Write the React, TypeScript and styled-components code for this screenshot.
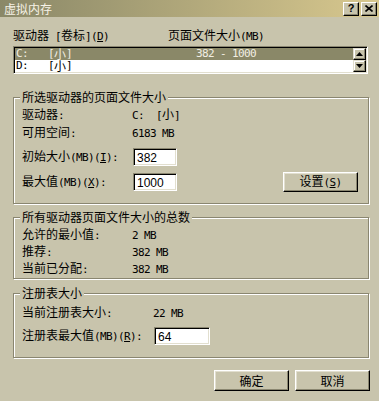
import React from 'react';
import styled, { createGlobalStyle } from 'styled-components';

const FACE = '#c8c4ac';
const FACE_LIGHT = '#e2dfcf';
const SHADOW = '#8a8670';
const DARK = '#000000';
const LIGHT = '#ffffff';
const HILITE = '#8a8868';

const Global = createGlobalStyle`
  html, body { margin: 0; padding: 0; background: ${FACE}; }
  body {
    font-family: "Noto Sans CJK SC", sans-serif;
    font-size: 12px;
    color: #000;
  }
  #root { width: 379px; height: 401px; overflow: hidden; }
`;

const Window = styled.div`
  width: 379px;
  height: 401px;
  background: ${FACE};
  display: flex;
  flex-direction: column;
`;

const TitleBar = styled.div`
  height: 17px;
  flex: none;
  display: flex;
  align-items: center;
  justify-content: space-between;
  padding: 0 2px 0 4px;
  background: linear-gradient(to right, #8a8868, #d8c88e);
`;

const TitleText = styled.span`
  color: #f6f2e6;
  font-size: 12px;
  line-height: 12px;
`;

const CaptionButtons = styled.div`
  display: flex;
  gap: 2px;
`;

const CaptionButton = styled.div`
  width: 16px;
  height: 14px;
  box-sizing: border-box;
  background: ${FACE};
  border: 1px solid;
  border-color: ${LIGHT} ${DARK} ${DARK} ${LIGHT};
  box-shadow: inset -1px -1px 0 ${SHADOW};
  display: flex;
  align-items: center;
  justify-content: center;
  font: bold 11px "Liberation Sans", sans-serif;
  line-height: 11px;
`;

const Body = styled.div`
  display: flex;
  flex-direction: column;
  padding: 12px 10px 0 13px;
`;

const ListHeader = styled.div`
  display: grid;
  grid-template-columns: 155px 1fr;
  height: 12px;
  line-height: 12px;
  white-space: nowrap;
`;

const ListBox = styled.div`
  margin: 5px 1px 0 0;
  height: 28px;
  box-sizing: border-box;
  border: 1px solid;
  border-color: ${SHADOW} ${LIGHT} ${LIGHT} ${SHADOW};
  box-shadow: inset 1px 1px 0 ${DARK}, inset -1px -1px 0 ${FACE_LIGHT};
  padding: 1px;
  background: #fff;
  display: flex;
`;

const Rows = styled.div`
  flex: 1;
  display: flex;
  flex-direction: column;
`;

const Row = styled.div<{ $selected?: boolean }>`
  height: 12px;
  overflow: hidden;
  display: grid;
  grid-template-columns: 32px 148px 1fr;
  padding-left: 1px;
  white-space: nowrap;
  background: ${(p) => (p.$selected ? HILITE : '#fff')};
  color: ${(p) => (p.$selected ? '#f2eee2' : '#000')};
`;

const Cell = styled.span`
  white-space: pre;
  line-height: 12px;
`;

const RowCell = styled.span`
  height: 12px;
  display: flex;
  align-items: center;
  white-space: pre;
  line-height: 12px;
`;

const ScrollBar = styled.div`
  width: 13px;
  display: flex;
  flex-direction: column;
`;

const ScrollButton = styled.div`
  height: 12px;
  box-sizing: border-box;
  background: ${FACE};
  border: 1px solid;
  border-color: ${FACE_LIGHT} ${DARK} ${DARK} ${FACE_LIGHT};
  box-shadow: inset -1px -1px 0 ${SHADOW}, inset 1px 1px 0 ${LIGHT};
  display: flex;
  align-items: center;
  justify-content: center;
`;

const Group = styled.fieldset<{ $mt: number; $pt: number; $pb: number }>`
  margin: ${(p) => p.$mt}px 0 0 0;
  padding: ${(p) => p.$pt}px 10px ${(p) => p.$pb}px 8px;
  border: 1px solid ${SHADOW};
  box-shadow: inset 1px 1px 0 ${LIGHT}, 1px 1px 0 ${LIGHT};
  min-inline-size: auto;
  display: flex;
  flex-direction: column;
`;

const Legend = styled.legend`
  padding: 0 2px;
  margin-left: -2px;
  font-size: 12px;
  line-height: 12px;
  background: ${FACE};
  white-space: nowrap;
`;

const FieldRow = styled.div<{ $h: number }>`
  display: flex;
  align-items: center;
  height: ${(p) => p.$h}px;
  white-space: nowrap;
`;

const FieldLabel = styled.div<{ $w: number }>`
  width: ${(p) => p.$w}px;
  flex: none;
  line-height: 12px;
`;

const FieldValue = styled.div`
  line-height: 12px;
`;

const Input = styled.input<{ $w: number; $ml: number }>`
  width: ${(p) => p.$w}px;
  height: 18px;
  margin: 0 0 0 ${(p) => p.$ml}px;
  box-sizing: border-box;
  border: 1px solid;
  border-color: ${SHADOW} ${LIGHT} ${LIGHT} ${SHADOW};
  box-shadow: inset 1px 1px 0 ${DARK}, inset -1px -1px 0 ${FACE_LIGHT};
  background: #fff;
  padding: 1px 0 0 3px;
  font: 12px "Liberation Sans", sans-serif;
  color: #000;
  outline: none;
`;

const Button = styled.button<{ $h?: number }>`
  width: 75px;
  height: ${(p) => p.$h ?? 21}px;
  box-sizing: border-box;
  background: ${FACE};
  border: 1px solid;
  border-color: ${LIGHT} ${DARK} ${DARK} ${LIGHT};
  box-shadow: inset -1px -1px 0 ${SHADOW}, inset 1px 1px 0 ${FACE_LIGHT};
  font: 12px "Noto Sans CJK SC", sans-serif;
  line-height: 12px;
  color: #000;
  padding: 0;
  margin: 0;
`;

const PushRight = styled.div`
  margin-left: auto;
  display: flex;
`;

const ButtonRow = styled.div`
  display: flex;
  justify-content: flex-end;
  gap: 6px;
  margin: 12px -1px 0 0;
`;

const Asc = styled.span`
  font-family: "DejaVu Sans Mono", monospace;
  font-size: 11px;
  letter-spacing: -0.62px;
  white-space: pre;
`;

function Txt({ s }: { s: string }) {
  const nodes: React.ReactNode[] = [];
  let buf = '';
  let ascii: boolean | null = null;
  let k = 0;
  const flush = () => {
    if (!buf) return;
    nodes.push(ascii ? <Asc key={k++}>{buf}</Asc> : <span key={k++}>{buf}</span>);
    buf = '';
  };
  for (let i = 0; i < s.length; i++) {
    const c = s[i];
    if (c === '&' && i + 1 < s.length) {
      flush();
      const m = s[++i];
      nodes.push(
        <Asc key={k++}>
          <u>{m}</u>
        </Asc>
      );
      ascii = null;
      continue;
    }
    const a = c.charCodeAt(0) < 128;
    if (ascii !== null && a !== ascii) flush();
    ascii = a;
    buf += c;
  }
  flush();
  return <>{nodes}</>;
}

const Arrow = ({ up }: { up?: boolean }) => (
  <svg width="7" height="4" viewBox="0 0 7 4">
    <path d={up ? 'M3.5 0 L7 4 L0 4 Z' : 'M0 0 L7 0 L3.5 4 Z'} fill="#000" />
  </svg>
);

const CloseGlyph = () => (
  <svg width="8" height="7" viewBox="0 0 8 7">
    <path d="M0.5 0.5 L7.5 6.5 M7.5 0.5 L0.5 6.5" stroke="#000" strokeWidth="1.6" />
  </svg>
);

const drives = [
  { drive: 'C:', label: '[小]', size: '382 - 1000', selected: true },
  { drive: 'D:', label: '[小]', size: '', selected: false },
];

export default function App() {
  return (
    <>
      <Global />
      <Window>
        <TitleBar>
          <TitleText>虚拟内存</TitleText>
          <CaptionButtons>
            <CaptionButton>?</CaptionButton>
            <CaptionButton>
              <CloseGlyph />
            </CaptionButton>
          </CaptionButtons>
        </TitleBar>
        <Body>
          <ListHeader>
            <Cell>
              <Txt s="驱动器 [卷标](&D)" />
            </Cell>
            <Cell>
              <Txt s="页面文件大小(MB)" />
            </Cell>
          </ListHeader>
          <ListBox>
            <Rows>
              {drives.map((d) => (
                <Row key={d.drive} $selected={d.selected}>
                  <RowCell>
                    <Txt s={d.drive} />
                  </RowCell>
                  <RowCell>
                    <Txt s={d.label} />
                  </RowCell>
                  <RowCell>
                    <Txt s={d.size} />
                  </RowCell>
                </Row>
              ))}
            </Rows>
            <ScrollBar>
              <ScrollButton>
                <Arrow up />
              </ScrollButton>
              <ScrollButton>
                <Arrow />
              </ScrollButton>
            </ScrollBar>
          </ListBox>

          <Group $mt={17} $pt={3} $pb={11}>
            <Legend>所选驱动器的页面文件大小</Legend>
            <FieldRow $h={18}>
              <FieldLabel $w={110}>
                <Txt s="驱动器:" />
              </FieldLabel>
              <FieldValue>
                <Txt s="C:  [小]" />
              </FieldValue>
            </FieldRow>
            <FieldRow $h={18}>
              <FieldLabel $w={110}>
                <Txt s="可用空间:" />
              </FieldLabel>
              <FieldValue>
                <Txt s="6183 MB" />
              </FieldValue>
            </FieldRow>
            <FieldRow $h={30}>
              <FieldLabel $w={110}>
                <Txt s="初始大小(MB)(&I):" />
              </FieldLabel>
              <Input $w={44} $ml={1} defaultValue="382" />
            </FieldRow>
            <FieldRow $h={20}>
              <FieldLabel $w={110}>
                <Txt s="最大值(MB)(&X):" />
              </FieldLabel>
              <Input $w={44} $ml={1} defaultValue="1000" />
              <PushRight>
                <Button $h={20}>
                  <Txt s="设置(&S)" />
                </Button>
              </PushRight>
            </FieldRow>
          </Group>

          <Group $mt={7} $pt={3} $pb={1}>
            <Legend>所有驱动器页面文件大小的总数</Legend>
            <FieldRow $h={17}>
              <FieldLabel $w={110}>
                <Txt s="允许的最小值:" />
              </FieldLabel>
              <FieldValue>
                <Txt s="2 MB" />
              </FieldValue>
            </FieldRow>
            <FieldRow $h={17}>
              <FieldLabel $w={110}>
                <Txt s="推荐:" />
              </FieldLabel>
              <FieldValue>
                <Txt s="382 MB" />
              </FieldValue>
            </FieldRow>
            <FieldRow $h={17}>
              <FieldLabel $w={110}>
                <Txt s="当前已分配:" />
              </FieldLabel>
              <FieldValue>
                <Txt s="382 MB" />
              </FieldValue>
            </FieldRow>
          </Group>

          <Group $mt={8} $pt={5} $pb={7}>
            <Legend>注册表大小</Legend>
            <FieldRow $h={18}>
              <FieldLabel $w={131}>
                <Txt s="当前注册表大小:" />
              </FieldLabel>
              <FieldValue>
                <Txt s="22 MB" />
              </FieldValue>
            </FieldRow>
            <FieldRow $h={28}>
              <FieldLabel $w={131}>
                <Txt s="注册表最大值(MB)(&R):" />
              </FieldLabel>
              <Input $w={56} $ml={1} defaultValue="64" />
            </FieldRow>
          </Group>

          <ButtonRow>
            <Button>确定</Button>
            <Button>取消</Button>
          </ButtonRow>
        </Body>
      </Window>
    </>
  );
}
